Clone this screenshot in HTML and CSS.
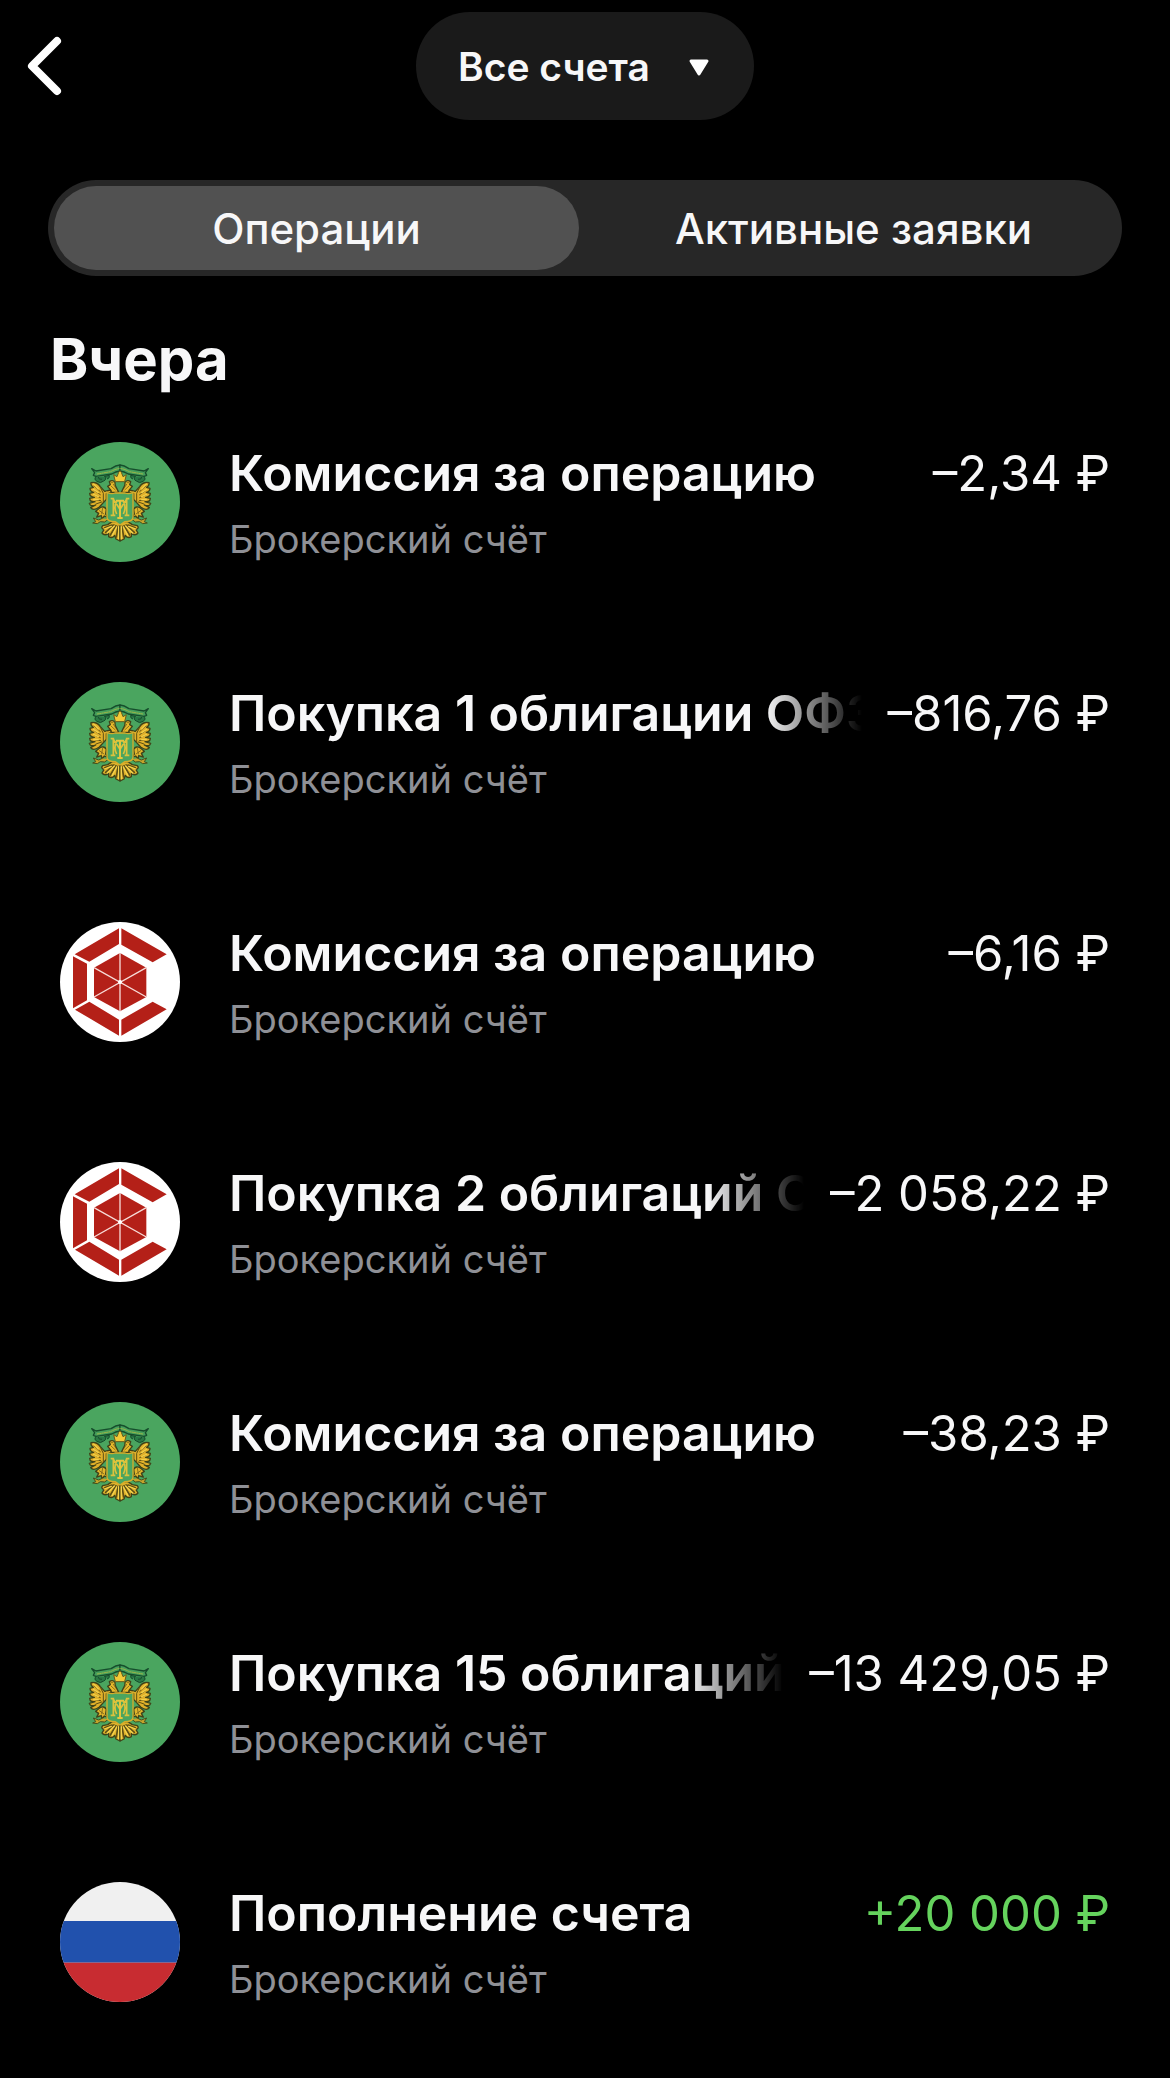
FILE: index.html
```html
<!DOCTYPE html>
<html lang="ru">
<head>
    <meta charset="UTF-8">
    <meta name="viewport" content="width=device-width, initial-scale=1.0">
    <title>Операции</title>
    <link rel="stylesheet" href="styles.css">
</head>
<body>
    <!-- Shared logos -->
    <svg class="sprite" aria-hidden="true">
        <defs>
            <g id="emblem-half" stroke-linejoin="round" stroke-linecap="round">
                <!-- ribbon -->
                <path d="M95 80 L108 87 L153 80 Q168 70 180 69 V87 Q168 88 155 96 L108 103 L100 100 L104 92 Z" fill="#46a05c" stroke="#164d2c" stroke-width="4"/>
                <path d="M112 96 L152 89 Q166 81 180 79" fill="none" stroke="#9db546" stroke-width="3" stroke-dasharray="4 3"/>
                <path d="M108 104 q-8 8 3 14 q10 8 20 -1 q10 -4 4 -14 M115 106 q0 8 10 6 M134 103 l14 -3 q2 9 -6 11" fill="#2a7a45" stroke="#164d2c" stroke-width="3"/>
                <!-- wing -->
                <path d="M121 134 Q112 119 93 122 Q91 130 100 136 L90 139 Q90 149 101 151 L89 154 Q89 165 103 166 L89 169 Q90 181 105 179 L88 184 Q91 195 107 189 L92 197 Q100 208 118 195 L139 172 V155 L154 151 L152 144 L134 148 Z" fill="#e0b02a" stroke="#3f4319" stroke-width="4"/>
                <path d="M102 131 L121 149 M102 145 L121 158 M104 159 L121 167 M105 173 L122 176 M108 186 L125 180 M120 134 L130 154 V180" fill="none" stroke="#5d5015" stroke-width="3"/>
                <path d="M101 126 L115 141 M100 142 L115 152 M101 157 L115 164 M101 172 L115 173" fill="none" stroke="#f3cf48" stroke-width="4"/>
                <!-- head -->
                <path d="M153 145 L143 133 L151 128 L148 119 Q158 112 165 121 Q164 130 169 137 L176 151 L154 151 Z" fill="#e8b92c" stroke="#3f4319" stroke-width="4"/>
                <path d="M154 122 h5 M154 133 L166 144 M160 127 L168 139" fill="none" stroke="#5d5015" stroke-width="2"/>
                <!-- leg -->
                <path d="M119 198 Q132 190 139 202 L137 216 L145 227 L133 222 L126 231 L124 221 L110 225 L116 214 L107 208 Z" fill="#e3b62c" stroke="#3f4319" stroke-width="4"/>
                <path d="M118 206 L132 216 M128 198 L125 216" stroke="#5d5015" stroke-width="2"/>
                <path d="M127 229 L116 234 L100 228 L107 239 L98 243 L112 245 L121 239 L134 240 L145 232" fill="#c5a42b" stroke="#3f511f" stroke-width="3"/>
                <!-- tail -->
                <path d="M180 238 L157 239 L143 248 L128 251 Q121 258 132 263 L126 273 Q133 283 146 274 L146 284 Q156 291 164 280 L168 291 L180 297 Z" fill="#e0b22a" stroke="#3f4319" stroke-width="4"/>
                <path d="M134 257 L156 249 M137 271 L162 249 M151 279 L168 251 M169 285 L174 253" fill="none" stroke="#5d5015" stroke-width="5"/>
                <path d="M133 261 L154 253 M142 273 L163 252 M157 280 L170 255 M176 290 V254" fill="none" stroke="#f4d24d" stroke-width="4"/>
            </g>
            <symbol id="ofz" viewBox="0 0 360 360">
                <circle cx="180" cy="180" r="180" fill="#4aa55f"/>
                <use href="#emblem-half"/>
                <use href="#emblem-half" transform="translate(360 0) scale(-1 1)"/>
                <path d="M141 151 Q154 158 165 153 H195 Q206 158 219 151 V226 Q218 239 194 239 L180 249 L166 239 Q142 239 141 226 Z" fill="#4aa55f" stroke="#d6ad2b" stroke-width="4"/>
                <path d="M166 119 L161 98 L171 104 L176 91 L180 86 L184 91 L189 104 L199 98 L194 119 Z" fill="#f3ca38" stroke="#685b1b" stroke-width="3"/>
                <path d="M152 170 H160 V220 M152 220 H166 M208 170 H200 V220 M208 220 H194 M160 172 L180 202 L200 172 M170 178 Q160 196 170 216 M190 178 Q200 196 190 216" fill="none" stroke="#dcc23c" stroke-width="5"/>
                <path d="M168 176 H192 M180 176 V228 M172 228 H188" fill="none" stroke="#e3c63e" stroke-width="6"/>
            </symbol>
            <symbol id="hexagon" viewBox="0 0 360 360">
                <circle cx="180" cy="180" r="180" fill="#fff"/>
                <path d="M177 19 V66 L88 119 L44 97 Z M184 19 L320 97 L278 121 L184 68 Z M39 103 L81 125 V235 L39 259 Z M45 263 L88 239 L177 293 V341 Z M184 293 L278 239 L320 262 L184 341 Z" fill="#b42018"/>
                <path d="M180 93 L259 137 V225 L180 268 L102 225 V137 Z" fill="#b42018"/>
                <path d="M180 93 V268 M102 137 L259 225 M259 137 L102 225" stroke="#f7dcd8" stroke-width="4"/>
                <circle cx="180" cy="180" r="6" fill="#fff"/>
            </symbol>
            <symbol id="russia" viewBox="0 0 360 360">
                <clipPath id="round"><circle cx="180" cy="180" r="180"/></clipPath>
                <g clip-path="url(#round)">
                    <rect width="360" height="360" fill="#f0f0f0"/>
                    <rect y="117" width="360" height="125" fill="#2151ad"/>
                    <rect y="242" width="360" height="118" fill="#c82c31"/>
                </g>
            </symbol>
        </defs>
    </svg>

    <header class="header">
        <button class="back" type="button" aria-label="Назад">
            <svg viewBox="0 0 36 60" aria-hidden="true"><path d="M31 5 L6 30 L31 55"/></svg>
        </button>
        <div class="account">
            <select class="account-select" aria-label="Счёт">
                <option>Все счета</option>
            </select>
            <svg class="account-arrow" viewBox="0 0 22 18" aria-hidden="true"><path d="M3 2 H19 L11 15 Z"/></svg>
        </div>
    </header>

    <main>
        <div class="tabs" role="tablist">
            <button class="tab active" type="button" role="tab" aria-selected="true">Операции</button>
            <button class="tab" type="button" role="tab" aria-selected="false">Активные заявки</button>
        </div>

        <h1>Вчера</h1>
        <ul class="operations">
            <li class="operation">
                <svg class="logo" aria-hidden="true"><use href="#ofz"/></svg>
                <div class="info">
                    <div class="line">
                        <span class="title">Комиссия за операцию</span>
                        <span class="amount">–2,34 ₽</span>
                    </div>
                    <div class="subtitle">Брокерский счёт</div>
                </div>
            </li>
            <li class="operation">
                <svg class="logo" aria-hidden="true"><use href="#ofz"/></svg>
                <div class="info">
                    <div class="line">
                        <span class="title fade">Покупка 1 облигации ОФЗ</span>
                        <span class="amount">–816,76 ₽</span>
                    </div>
                    <div class="subtitle">Брокерский счёт</div>
                </div>
            </li>
            <li class="operation">
                <svg class="logo" aria-hidden="true"><use href="#hexagon"/></svg>
                <div class="info">
                    <div class="line">
                        <span class="title">Комиссия за операцию</span>
                        <span class="amount">–6,16 ₽</span>
                    </div>
                    <div class="subtitle">Брокерский счёт</div>
                </div>
            </li>
            <li class="operation">
                <svg class="logo" aria-hidden="true"><use href="#hexagon"/></svg>
                <div class="info">
                    <div class="line">
                        <span class="title fade">Покупка 2 облигаций С</span>
                        <span class="amount">–2 058,22 ₽</span>
                    </div>
                    <div class="subtitle">Брокерский счёт</div>
                </div>
            </li>
            <li class="operation">
                <svg class="logo" aria-hidden="true"><use href="#ofz"/></svg>
                <div class="info">
                    <div class="line">
                        <span class="title">Комиссия за операцию</span>
                        <span class="amount">–38,23 ₽</span>
                    </div>
                    <div class="subtitle">Брокерский счёт</div>
                </div>
            </li>
            <li class="operation">
                <svg class="logo" aria-hidden="true"><use href="#ofz"/></svg>
                <div class="info">
                    <div class="line">
                        <span class="title fade">Покупка 15 облигаций</span>
                        <span class="amount">–13 429,05 ₽</span>
                    </div>
                    <div class="subtitle">Брокерский счёт</div>
                </div>
            </li>
            <li class="operation">
                <svg class="logo" aria-hidden="true"><use href="#russia"/></svg>
                <div class="info">
                    <div class="line">
                        <span class="title">Пополнение счета</span>
                        <span class="amount income">+20 000 ₽</span>
                    </div>
                    <div class="subtitle">Брокерский счёт</div>
                </div>
            </li>
        </ul>
    </main>
</body>
</html>
```
FILE: styles.css
```css
* {
    box-sizing: border-box;
}
body {
    font-family: Inter, 'Liberation Sans', sans-serif;
    background: #000;
    color: #f7f7f8;
    margin: 0;
}
button, select {
    font: inherit;
    color: inherit;
    border: 0;
    padding: 0;
    background: none;
    cursor: pointer;
}
.sprite {
    display: block;
    width: 0;
    height: 0;
}
.header {
    display: grid;
    grid-template-columns: 1fr auto 1fr;
    align-items: center;
    padding: 12px 26px;
}
.back {
    display: flex;
    justify-self: start;
}
.back svg {
    width: 36px;
    height: 60px;
    fill: none;
    stroke: #fff;
    stroke-width: 8;
    stroke-linecap: round;
    stroke-linejoin: round;
}
.account {
    display: grid;
    align-items: center;
    background: #1a1a1a;
    border-radius: 54px;
}
.account-select,
.account-arrow {
    grid-area: 1 / 1;
}
.account-select {
    appearance: none;
    height: 108px;
    padding: 0 104px 0 42px;
    border-radius: 54px;
    font-size: 39px;
    font-weight: 600;
}
.account-arrow {
    justify-self: end;
    width: 22px;
    height: 18px;
    margin: 4px 44px 0 0;
    fill: #fff;
    stroke: #fff;
    stroke-width: 3;
    stroke-linejoin: round;
    pointer-events: none;
}
main {
    padding: 48px 48px 0;
}
.tabs {
    display: grid;
    grid-template-columns: 1fr 1fr;
    gap: 12px;
    padding: 6px;
    background: #272727;
    border-radius: 48px;
}
.tab {
    height: 84px;
    border-radius: 42px;
    font-size: 42px;
    font-weight: 500;
}
.tab.active {
    background: #515151;
}
h1 {
    margin: 46px 0;
    padding-left: 2px;
    font-size: 58px;
    line-height: 74px;
    font-weight: 700;
}
.operations {
    list-style: none;
    display: flex;
    flex-direction: column;
    gap: 120px;
    margin: 0;
    padding: 0 12px;
}
.operation {
    display: flex;
    gap: 49px;
    height: 120px;
}
.logo {
    flex: none;
    width: 120px;
    height: 120px;
}
.info {
    flex: 1;
    min-width: 0;
}
.line {
    display: flex;
    align-items: baseline;
    justify-content: space-between;
    gap: 26px;
    line-height: 62px;
    white-space: nowrap;
}
.title {
    min-width: 0;
    overflow: hidden;
    font-size: 50px;
    font-weight: 600;
}
.fade {
    -webkit-mask-image: linear-gradient(to left, transparent, #000 96px);
    mask-image: linear-gradient(to left, transparent, #000 96px);
}
.amount {
    flex: none;
    font-size: 49px;
}
.income {
    color: #65d35d;
}
.subtitle {
    margin-top: 6px;
    color: #8f9096;
    font-size: 38px;
    line-height: 56px;
}
```
